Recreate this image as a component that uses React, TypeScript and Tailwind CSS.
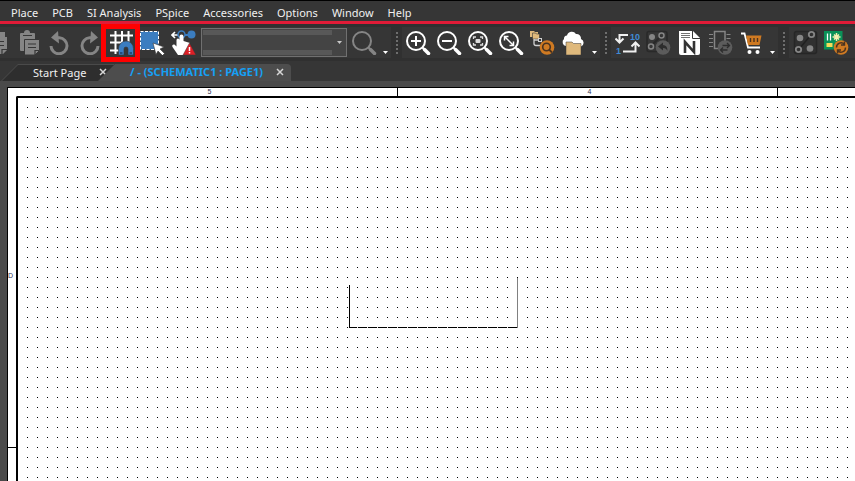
import type { ReactNode } from "react";
import { twMerge } from "tailwind-merge";

const MENUS = ["Place", "PCB", "SI Analysis", "PSpice", "Accessories", "Options", "Window", "Help"];

function Icon({ children }: { children: ReactNode }) {
    return (
        <svg viewBox="0 0 25 25" className="w-[25px] h-[25px] shrink-0" fill="none">
            {children}
        </svg>
    );
}

function ToolButton({
    label,
    className,
    children,
}: {
    label: string;
    className?: string;
    children: ReactNode;
}) {
    return (
        <button
            aria-label={label}
            className={twMerge("flex items-center w-[31px] h-[31px] pl-[3px] shrink-0", className)}
        >
            <Icon>{children}</Icon>
        </button>
    );
}

function MoreButton() {
    return (
        <button aria-label="More tools" className="flex items-end w-[11px] h-[31px] pl-[3px] pb-1 shrink-0">
            <svg viewBox="0 0 5 3" className="w-[5px] h-[3px]">
                <path d="M0 0h5L2.5 3z" fill="#fff" />
            </svg>
        </button>
    );
}

function Grip() {
    return (
        <div className="w-[11px] h-[31px] shrink-0 flex items-center justify-center">
            <div className="w-0.5 h-[22px] bg-[repeating-linear-gradient(#6e6e6e_0_2px,transparent_2px_4px)]" />
        </div>
    );
}

function Lens({ color = "#fff", children }: { color?: string; children?: ReactNode }) {
    return (
        <>
            <circle cx="10" cy="11" r="9" stroke={color} strokeWidth="2" />
            <path d="M16.5 17.5l1.5 1.5" stroke={color} strokeWidth="2" />
            <path d="M18.5 19.5l4 4" stroke={color} strokeWidth="3.5" strokeLinecap="round" />
            {children}
        </>
    );
}

function EditTools() {
    return (
        <div className="flex items-center bg-[#363636]">
            <button aria-label="Copy" className="flex items-center w-3.5 h-[31px] shrink-0">
                <svg viewBox="0 0 14 25" className="w-3.5 h-[25px]">
                    <path d="M0 2h5v5h2v13l-4 4H0z" fill="#858585" />
                    <path d="M0 11.5h4M0 15.5h4M2 24v-4.5h5" stroke="#363636" fill="none" strokeWidth="1.2" />
                </svg>
            </button>
            <ToolButton label="Paste" className="w-[30px]">
                <path d="M3 4a1 1 0 0 1 1-1h3a3 3 0 0 1 6 0h4a1 1 0 0 1 1 1v17H4a1 1 0 0 1-1-1z" fill="#858585" />
                <path d="M6 5.5h9" stroke="#363636" />
                <path d="M7.5 9.5h15v11L18 25H7.5z" fill="#858585" stroke="#363636" />
                <path d="M11 14h8M11 17.5h8M18 25v-4.5h4" stroke="#363636" strokeWidth="1.2" />
            </ToolButton>
            <ToolButton label="Undo" className="w-[30px]">
                <path d="M11 1L4 7.5l8 6z" fill="#858585" />
                <path d="M9 7.8h3.5A8 8 0 1 1 4 16" stroke="#858585" strokeWidth="3" />
            </ToolButton>
            <ToolButton label="Redo" className="w-[30px]">
                <path d="M14 1l7 6.5-8 6z" fill="#858585" />
                <path d="M16 7.8h-3.5A8 8 0 1 0 21 16" stroke="#858585" strokeWidth="3" />
            </ToolButton>
            <ToolButton label="Snap to grid" className="ml-0.5">
                <path
                    d="M6.5 1v23M13 1v12M19.5 1v11M1 5.5h23M1 12.5h12M1 20.5h9"
                    stroke="#fff"
                    strokeWidth="2"
                />
                <path
                    d="M9.5 25v-6.500a7.500 7.500 0 0 1 15 0V25H19v-6a2 2 0 0 0-4 0v6z"
                    fill="#3b7dc0"
                    stroke="#363636"
                    strokeWidth="0.6"
                />
                <path d="M11 23h2.5M20.5 23H23" stroke="#244f7c" strokeWidth="2" />
            </ToolButton>
            <ToolButton label="Area select">
                <rect x="0.5" y="1.5" width="18" height="18" fill="#3b7dc0" stroke="#fff" strokeDasharray="3 1.5" />
                <path
                    d="M13 13l11 4-4 2 4.5 4.5-2 2L18 21l-2 3.5z"
                    fill="#fff"
                    stroke="#363636"
                    strokeWidth="0.6"
                />
            </ToolButton>
            <ToolButton label="Drag connected object">
                <path d="M0.5 5H7M4 2L1 5l3 3" stroke="#fff" strokeWidth="1.6" />
                <path d="M14 5h4" stroke="#3b7dc0" strokeWidth="2" />
                <circle cx="10.5" cy="4.5" r="3.5" stroke="#3b7dc0" strokeWidth="1.5" />
                <circle cx="20.5" cy="4.5" r="4" fill="#3b7dc0" />
                <path
                    d="M8.5 6.5a2 2 0 0 1 4 0V11l6.5 2v8l-3 4H7l-5.500-8c-1-2 1-3 2.500-2l1.500 1.500V10a1.500 1.500 0 0 1 3 0z"
                    fill="#fff"
                />
                <path d="M18.5 13L25 25H12z" fill="#dc1f26" stroke="#363636" strokeWidth="0.5" />
                <path d="M18.5 17v4M18.5 22v1.5" stroke="#fff" strokeWidth="1.5" />
            </ToolButton>
            <div className="relative w-[146px] h-[29px] ml-0.5 shrink-0">
                <select
                    aria-label="Search text"
                    className="appearance-none block w-full h-full border border-[#707070] bg-[#444444] bg-[linear-gradient(#585858_0_5px,#444444_5px_20px,#585858_20px_25px)] bg-[length:129px_25px] bg-[position:1px_1px] bg-no-repeat"
                />
                <svg viewBox="0 0 5 3" className="absolute right-[5px] top-[13px] w-[5px] h-[3px] pointer-events-none">
                    <path d="M0 0h5L2.5 3z" fill="#c8c8c8" />
                </svg>
            </div>
            <ToolButton label="Search" className="ml-0.5">
                <Lens color="#858585" />
            </ToolButton>
            <MoreButton />
        </div>
    );
}

function ViewTools() {
    return (
        <div className="flex items-center bg-[#363636] pl-px">
            <ToolButton label="Zoom in">
                <Lens>
                    <path d="M10 6v10M5 11h10" stroke="#fff" strokeWidth="2" />
                </Lens>
            </ToolButton>
            <ToolButton label="Zoom out">
                <Lens>
                    <path d="M5 11h10" stroke="#fff" strokeWidth="2" />
                </Lens>
            </ToolButton>
            <ToolButton label="Zoom to area">
                <Lens>
                    <path
                        d="M5.5 9V7H8M12 7h2.5v2M14.5 13v2H12M8 15H5.5v-2"
                        stroke="#ddd"
                        strokeWidth="1.3"
                    />
                    <rect x="7.5" y="9" width="5" height="4" rx="1" fill="#ddd" />
                </Lens>
            </ToolButton>
            <ToolButton label="Zoom to all">
                <Lens>
                    <path d="M6 7l8 8M5.5 10.5v-4h4M14.5 11.5v4h-4" stroke="#fff" strokeWidth="1.5" />
                </Lens>
            </ToolButton>
            <ToolButton label="Find in hierarchy">
                <path d="M0 1h4l1 1h3v5H0z" fill="#dfb97c" />
                <path d="M2.5 3h3l1 1h3v5h-7z" fill="#dfb97c" stroke="#363636" strokeWidth="0.6" />
                <path d="M4 9v4.5a2 2 0 0 0 2 2h4M4 10h5" stroke="#d0d0d0" strokeWidth="1.3" />
                <rect x="8.5" y="8.5" width="3" height="3" stroke="#d0d0d0" />
                <circle cx="17" cy="17.5" r="7.3" fill="#cf7a22" />
                <circle cx="16.5" cy="17" r="3.8" stroke="#4a3320" strokeWidth="1.6" />
                <path d="M19 19.5l3 3" stroke="#4a3320" strokeWidth="1.8" />
            </ToolButton>
            <ToolButton label="Open from cloud">
                <path
                    d="M5 16a4 4 0 0 1-2-7 3 3 0 0 1 3-3.5A5 5 0 0 1 15 4a4.5 4.5 0 0 1 5 5 4 4 0 0 1 0 7.5z"
                    fill="#fff"
                />
                <path d="M5 12h6l1.5 1.5H20V25H5z" fill="#dfb97c" stroke="#363636" strokeWidth="0.5" />
            </ToolButton>
            <MoreButton />
        </div>
    );
}

function DesignTools() {
    return (
        <div className="flex items-center bg-[#363636] pl-px">
            <ToolButton label="Annotate">
                <path
                    d="M13 5H4.5v7M0.5 8.5l4 4 4-4M8 21.5h12.5V13M16.5 16.5l4-4 4 4"
                    stroke="#f0f0f0"
                    strokeWidth="2"
                />
                <g fontSize="9" fontWeight="700" fontFamily="Liberation Sans, sans-serif" fill="#3f8ad6">
                    <text x="15" y="10">10</text>
                    <text x="1" y="24">1</text>
                </g>
            </ToolButton>
            <ToolButton label="Back annotate">
                <rect x="1" y="1.5" width="20" height="20" rx="2" stroke="#292929" strokeWidth="1.5" />
                <path d="M7 14l8-8" stroke="#292929" strokeWidth="2" />
                <circle cx="6" cy="7" r="3" fill="#858585" />
                <circle cx="15.5" cy="5.5" r="2.5" stroke="#858585" strokeWidth="1.5" />
                <circle cx="5" cy="16.5" r="2.5" stroke="#858585" strokeWidth="1.5" />
                <circle cx="17" cy="17.5" r="7.3" fill="#5c5c5c" />
                <path d="M12 16.5l5-4V15c3 0 4.5 2 4.5 6-1-2-2-3-4.5-3v2.5z" fill="#2d2d2d" />
            </ToolButton>
            <ToolButton label="Netlist">
                <path d="M2 1h14l7 7v15a2 2 0 0 1-2 2H4a2 2 0 0 1-2-2z" fill="#fff" />
                <path d="M15.5 1v7.5H23" stroke="#363636" />
                <path d="M4 3.5h9M4 5.5h9M4 7.5h9" stroke="#707070" />
                <path d="M8 23V12l9 10V11" stroke="#333" strokeWidth="2.6" />
            </ToolButton>
            <ToolButton label="Update part">
                <path
                    d="M1 4.5h4M1 8.5h4M1 12.5h4M1 16.5h4M18.5 4.5h4M18.5 8.5h4"
                    stroke="#858585"
                    strokeWidth="1.2"
                />
                <rect x="6.5" y="1.5" width="10.5" height="17" stroke="#858585" strokeWidth="1.5" />
                <circle cx="17" cy="17.5" r="7.3" fill="#5c5c5c" />
                <path
                    d="M21.5 15.5h-7M19 13l2.5 2.5L19 18M12.5 20h7M15 17.5L12.5 20l2.5 2.5"
                    stroke="#2d2d2d"
                    strokeWidth="1.3"
                />
            </ToolButton>
            <ToolButton label="Parts cart">
                <path d="M2 3.5h3.5L9 17.5h12" stroke="#fff" strokeWidth="1.8" />
                <path d="M7 5.5h15.5L20.5 15H9z" fill="#cf7a22" />
                <path d="M11.5 8v4M15 8v4M18.5 8v4" stroke="#4a3320" strokeWidth="1.4" />
                <circle cx="10.5" cy="22" r="2" fill="#fff" />
                <circle cx="18.5" cy="22" r="2" fill="#fff" />
            </ToolButton>
            <MoreButton />
        </div>
    );
}

function PcbTools() {
    return (
        <div className="flex items-center grow bg-[#363636] pl-px">
            <ToolButton label="Place board parts">
                <rect x="1.5" y="1.5" width="22" height="22" rx="2" fill="#303030" stroke="#262626" strokeWidth="1.5" />
                <path d="M6 19L18 5" stroke="#202020" strokeWidth="1.5" />
                <circle cx="7" cy="8" r="3.3" fill="#858585" />
                <circle cx="18.5" cy="4.5" r="2.7" stroke="#858585" strokeWidth="1.8" />
                <circle cx="5.5" cy="19.5" r="2.7" stroke="#858585" strokeWidth="1.8" />
                <circle cx="17" cy="18.5" r="3.3" fill="#858585" />
            </ToolButton>
            <ToolButton label="Sync PCB layout">
                <rect y="1" width="18.5" height="18.5" fill="#0a9158" />
                <path d="M3.5 3.5v7M6.5 3.5v7" stroke="#fff" strokeWidth="1.3" />
                <path d="M12.5 3v8M8.5 7h8M10 4.5l5 5M15 4.5l-5 5" stroke="#f7efb0" strokeWidth="1.5" />
                <rect x="2.5" y="13" width="6" height="4" fill="#f4dc5a" />
                <circle cx="17" cy="17.5" r="7.3" fill="#cf7a22" />
                <path
                    d="M12.5 17.5a4.5 4.5 0 0 1 8-3M21.5 17.5a4.5 4.5 0 0 1-8 3M20.5 11.5V15H17M13.5 23.5V20H17"
                    stroke="#4a3320"
                    strokeWidth="1.4"
                />
            </ToolButton>
        </div>
    );
}

function CloseButton({ name }: { name: string }) {
    return (
        <button aria-label={`Close ${name}`} className="p-px">
            <svg viewBox="0 0 8 8" className="w-2 h-2">
                <path d="M1 1l6 6M7 1L1 7" stroke="#d6d6d6" strokeWidth="1.5" />
            </svg>
        </button>
    );
}

function Tabs() {
    return (
        <nav className="flex h-[17px] bg-[#363636] mt-[3px] text-[11px] leading-none">
            <div className="w-[114px] pl-px">
                <div className="h-full pt-px bg-[#4a4a4a] [clip-path:polygon(17px_0,100%_0,100%_100%,0_100%)]">
                    <div className="flex items-center h-full pl-8 pb-0.5 gap-3 bg-[#2e2e2e] text-[#f0f0f0] [clip-path:polygon(17px_0,100%_0,100%_100%,1px_100%)]">
                        <button className="whitespace-nowrap">Start Page</button>
                        <CloseButton name="Start Page" />
                    </div>
                </div>
            </div>
            <div className="-ml-4 flex items-center w-[193px] pl-8 pb-0.5 gap-3 rounded-tr-sm bg-[#4d4d4d] [clip-path:polygon(17px_0,100%_0,100%_100%,0_100%)]">
                <button className="whitespace-nowrap font-bold text-[#15a0f5]">/ - (SCHEMATIC1 : PAGE1)</button>
                <CloseButton name="PAGE1" />
            </div>
        </nav>
    );
}

function Schematic() {
    return (
        <svg className="block w-full h-full" shapeRendering="crispEdges" role="img" aria-label="Schematic page">
            <defs>
                <pattern id="grid" width="10" height="10" patternUnits="userSpaceOnUse">
                    <rect x="9" y="9" width="1" height="1" fill="#000" />
                </pattern>
            </defs>
            <rect width="100%" height="100%" fill="url(#grid)" />
            <rect x="331" y="187" width="1" height="43" fill="#000" />
            {/* the wire is knocked out where it crosses a grid dot */}
            <rect x="331" y="229" width="169" height="1" fill="#fff" />
            <path d="M331 229.5h8" stroke="#000" />
            <path d="M340 229.5h160" stroke="#000" strokeDasharray="9 1" />
            <rect x="499" y="180" width="1" height="50" fill="#808080" />
        </svg>
    );
}

function Sheet() {
    return (
        <main className="grow min-h-0 pt-1.5 pl-[7px] bg-[#4a4a4a] flex">
            <div className="grow min-w-0 flex flex-col border-t border-l border-black bg-white text-[#303050] text-[7px] leading-[8px] font-['Liberation_Sans',sans-serif]">
                <div className="flex h-2 pl-2.5 shrink-0">
                    <div className="w-[380px] shrink-0 border-r border-black text-center pl-1">5</div>
                    <div className="w-[380px] shrink-0 border-r border-black text-center pl-1">4</div>
                </div>
                <div className="flex grow min-h-0">
                    <div className="w-2 shrink-0">
                        <div className="h-[352px] pt-2 border-b border-black flex items-center">D</div>
                    </div>
                    <div className="grow min-w-0 border-t-2 border-l-2 border-black rounded-tl-[2px]">
                        <Schematic />
                    </div>
                </div>
            </div>
        </main>
    );
}

function App() {
    return (
        <div className="h-screen flex flex-col overflow-hidden bg-[#363636] font-['Noto_Sans','Open_Sans',sans-serif]">
            <header className="shrink-0">
                <div className="flex items-center h-[21px] pt-1 pl-[11px] gap-3.5 border-t border-black text-[11px] text-[#f0f0f0]">
                    {MENUS.map((menu) => (
                        <button key={menu} className="whitespace-nowrap">
                            {menu}
                        </button>
                    ))}
                </div>
                <div className="h-[3px] bg-[#e01b37]" />
                <div className="flex items-center h-[37px] bg-[#303030]">
                    <div className="relative">
                        <EditTools />
                        <div className="absolute left-[101px] -top-[3px] w-[39px] h-[38px] border-[5px] border-[#ff0000] pointer-events-none" />
                    </div>
                    <Grip />
                    <ViewTools />
                    <Grip />
                    <DesignTools />
                    <Grip />
                    <PcbTools />
                </div>
                <Tabs />
            </header>
            <Sheet />
        </div>
    );
}

export default App;
